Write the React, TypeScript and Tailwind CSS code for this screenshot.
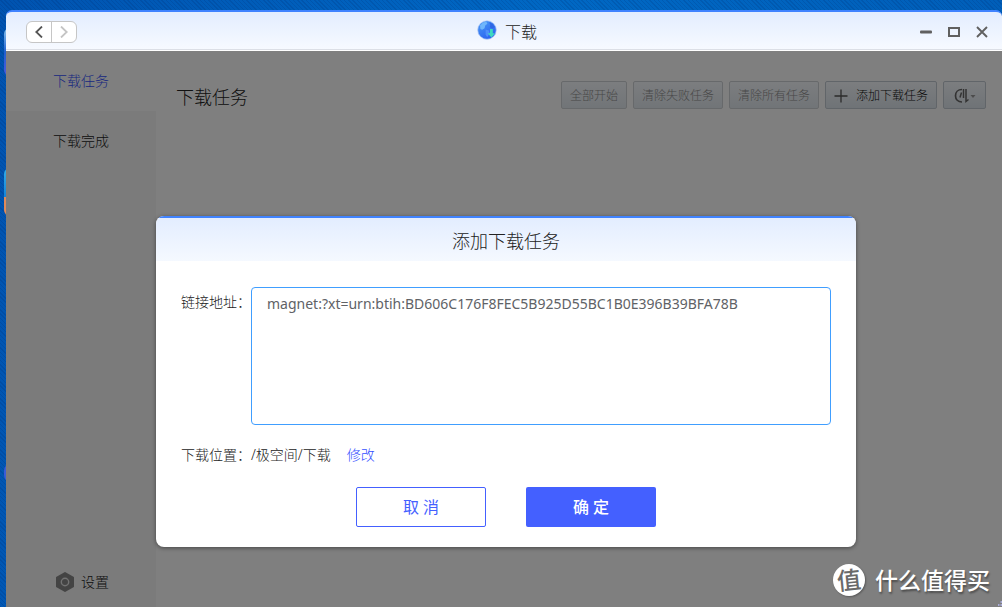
import { useState } from "react";
import type { ReactNode } from "react";

function GlobeIcon() {
  return (
    <svg width="20" height="20" viewBox="0 0 20 20" className="mb-1" aria-hidden="true">
      <defs>
        <linearGradient id="globe" x1="0" y1="0" x2="0.6" y2="1">
          <stop offset="0" stopColor="#4a9bf5" />
          <stop offset="1" stopColor="#2a63f0" />
        </linearGradient>
      </defs>
      <circle cx="10" cy="10" r="9.3" fill="url(#globe)" stroke="#b9cdf3" strokeWidth="0.7" />
      <path d="M3 5.5 6 2.6l3.4-.8 1 2-2.2 1.8-.6 2.600-2.400 1.600L3.400 9z" fill="#6fb6fb" />
      <path d="m12 2.200 3.600 1.600 2.200 3.400-2.400 1.400-2.600-1.400.6-2.400z" fill="#2f66e4" />
      <path d="m8.600 9.400 3.200 1 .8 2.800-2.400 4-1.600-2.800z" fill="#4f8ffa" />
      <path d="M13 9h2.800v4.300h2.200l-3.600 4.200-3.600-4.200H13z" fill="#3ed9c0" />
    </svg>
  );
}

type ToolButtonProps = {
  children: ReactNode;
  disabled?: boolean;
  label?: string;
};

function ToolButton({ children, disabled = false, label }: ToolButtonProps) {
  return (
    <button
      type="button"
      disabled={disabled}
      aria-label={label}
      className={
        disabled
          ? "flex h-7 items-center rounded-xs border border-[#cfd2d6] bg-linear-to-b from-[#f8fbff] to-[#e3eaf0] px-2 pt-0.5 text-xs text-[#909090]"
          : "flex h-7 items-center rounded-xs border border-[#c3cad2] bg-linear-to-b from-[#f8fbff] to-[#dfe7ee] px-2 pt-0.5 text-xs text-[#111]"
      }
    >
      {children}
    </button>
  );
}

function TitleBar() {
  return (
    <header className="grid h-[41px] grid-cols-[1fr_auto_1fr] items-center rounded-t-md border-t-2 border-b border-t-[#4083ff] border-b-white bg-linear-to-b from-[#e3edff] to-[#f7faff] pt-0.5 pr-3.5 pl-5 shadow-[inset_0_-1px_0_#dcdfe6]">
      <div className="flex h-[22px] w-[51px] divide-x divide-[#c6c6c6] rounded-md border border-[#c6c6c6] bg-white">
        <button type="button" aria-label="后退" className="flex flex-1 items-center justify-center">
          <svg width="8" height="12" viewBox="0 0 8 12" fill="none" stroke="#555" strokeWidth="1.8">
            <path d="M7 .5 1.300 6 7 11.500" />
          </svg>
        </button>
        <button type="button" aria-label="前进" className="flex flex-1 items-center justify-center">
          <svg width="8" height="12" viewBox="0 0 8 12" fill="none" stroke="#c4c4c4" strokeWidth="1.8">
            <path d="M1 .5 6.700 6 1 11.500" />
          </svg>
        </button>
      </div>
      <div className="flex items-center gap-2">
        <GlobeIcon />
        <span className="text-base leading-6 text-[#222]">下载</span>
      </div>
      <div className="flex justify-end gap-4 text-[#606060]">
        <button type="button" aria-label="最小化">
          <svg width="12" height="12" viewBox="0 0 12 12">
            <rect y="4.5" width="12" height="3" rx="1" fill="currentColor" />
          </svg>
        </button>
        <button type="button" aria-label="最大化">
          <svg width="12" height="12" viewBox="0 0 12 12" fill="none" stroke="currentColor" strokeWidth="2">
            <rect x="1" y="2" width="10" height="8" />
          </svg>
        </button>
        <button type="button" aria-label="关闭">
          <svg width="12" height="12" viewBox="0 0 12 12" fill="none" stroke="currentColor" strokeWidth="1.9">
            <path d="m1 1 10 10M11 1 1 11" />
          </svg>
        </button>
      </div>
    </header>
  );
}

function Sidebar() {
  return (
    <nav className="flex w-[150px] shrink-0 flex-col bg-[#f6f6f6] text-sm">
      <a href="#tasks" className="flex h-[60px] items-center bg-white pl-[47px] text-[#3450ff]">
        下载任务
      </a>
      <a href="#done" className="flex h-[60px] items-center pl-[47px]">
        下载完成
      </a>
      <a href="#settings" className="mt-auto mb-[15px] flex items-center gap-1.5 pl-[49px] leading-5">
        <svg width="20" height="20" viewBox="0 0 20 20" aria-hidden="true">
          <path d="M10 1 18 5.500v9L10 19l-8-4.500v-9z" fill="#888" stroke="#888" strokeWidth="2" strokeLinejoin="round" />
          <circle cx="10" cy="10" r="3.700" fill="none" stroke="#e4e4e4" strokeWidth="1.400" />
        </svg>
        设置
      </a>
    </nav>
  );
}

function TaskList() {
  return (
    <main className="flex-1 bg-white">
      <div className="flex items-start justify-between pt-[30px] pr-4 pl-5">
        <h1 className="pt-0.5 text-lg leading-7">下载任务</h1>
        <div className="flex gap-1.5">
          <ToolButton disabled>全部开始</ToolButton>
          <ToolButton disabled>清除失败任务</ToolButton>
          <ToolButton disabled>清除所有任务</ToolButton>
          <ToolButton>
            <svg width="14" height="14" viewBox="0 0 14 14" className="mr-2" stroke="#555" strokeWidth="1.3" aria-hidden="true">
              <path d="M7 .5v13M.5 7h13" />
            </svg>
            添加下载任务
          </ToolButton>
          <ToolButton label="限速">
            <svg width="25" height="16" viewBox="0 0 25 16" fill="none" stroke="#666" aria-hidden="true">
              <path d="M10 1.500C6 1.500 3.500 4.300 3.500 7.800S6 14 10 14" strokeWidth="1.700" />
              <path d="M9.500 4.500 8 9.500" strokeWidth="1.500" />
              <path d="M11.500 1v9M14 1v12.500l2.500-2" strokeWidth="1.500" />
              <path d="M18.500 7h5L21 10z" fill="#999" stroke="none" />
            </svg>
          </ToolButton>
        </div>
      </div>
    </main>
  );
}

function AddTaskDialog() {
  const [link, setLink] = useState("magnet:?xt=urn:btih:BD606C176F8FEC5B925D55BC1B0E396B39BFA78B");

  return (
    <div
      role="dialog"
      aria-labelledby="dialog-title"
      className="w-[700px] overflow-hidden rounded-lg bg-white shadow-[0_1px_4px_rgba(0,0,0,0.45)]"
    >
      <h2
        id="dialog-title"
        className="flex h-[45px] items-center justify-center border-t-2 border-[#4083ff] bg-linear-to-b from-[#e3edff] to-[#f5f9ff] pt-0.5 text-lg"
      >
        添加下载任务
      </h2>
      <form className="px-[25px] pt-[26px] pb-5 text-sm" onSubmit={(e) => e.preventDefault()}>
        <div className="flex">
          <label htmlFor="link" className="w-[70px] shrink-0 pt-[3px] leading-6 whitespace-nowrap">
            链接地址：
          </label>
          <textarea
            id="link"
            value={link}
            onChange={(e) => setLink(e.target.value)}
            className="h-[138px] flex-1 resize-none rounded-sm border border-[#409eff] px-[15px] py-1 leading-6 font-normal text-[#606266] outline-none"
          />
        </div>
        <div className="mt-[18px] flex leading-6">
          <span className="w-[70px] shrink-0 whitespace-nowrap">下载位置：</span>
          <span>/极空间/下载</span>
          <a href="#location" className="ml-4 text-[#3450ff]">
            修改
          </a>
        </div>
        <div className="mt-5 flex justify-center gap-10 text-base">
          <button type="button" className="h-10 w-[130px] rounded-xs border border-[#4460ff] font-normal text-[#4460ff]">
            取 消
          </button>
          <button type="submit" className="h-10 w-[130px] rounded-xs bg-[#4460ff] font-medium text-white">
            确 定
          </button>
        </div>
      </form>
    </div>
  );
}

function Watermark() {
  return (
    <div className="absolute right-3 bottom-[11px] flex items-center gap-2.5 text-white">
      <span className="flex size-8 items-center justify-center rounded-full bg-white text-2xl leading-8 font-medium text-[#6a6a6a] shadow-[1px_1px_2px_rgba(0,0,0,0.3)]">
        <span className="-rotate-6">值</span>
      </span>
      <span className="text-[23px] leading-8 font-medium [text-shadow:1px_2px_2px_rgba(0,0,0,0.4)]">什么值得买</span>
    </div>
  );
}

export default function App() {
  return (
    <div className="relative flex min-h-screen flex-col overflow-hidden bg-[#0050ae] bg-[repeating-linear-gradient(45deg,rgba(0,30,90,0.15)_0_1px,transparent_1px_3px),linear-gradient(100deg,#0053b0,#0068c4_50%,#005cb6)] pt-2.5 pl-1.5 font-['Noto_Sans','Noto_Sans_CJK_SC',sans-serif] font-light text-[#222]">
      {/* desktop shortcuts peeking out from behind the window */}
      <div className="absolute top-7 left-1 h-12 w-4 rounded-md bg-linear-to-b from-[#8cc4ec] via-[#2060d0] to-[#4a58e0]" />
      <div className="absolute top-[168px] left-1 h-12 w-4 rounded-md bg-linear-to-b from-[#35aee8] from-0% via-[#1684d8] via-60% to-[#e08a5a] to-60%" />
      <div className="absolute top-[463px] left-1 h-5 w-4 rounded-full bg-[#3a5cd8]" />

      <div className="relative flex flex-1 flex-col">
        <TitleBar />
        <div className="relative flex flex-1">
          <Sidebar />
          <TaskList />
          <div className="absolute inset-0 flex items-start justify-center bg-black/50 pt-[165px] pl-1">
            <AddTaskDialog />
          </div>
        </div>
      </div>

      <Watermark />
      <svg width="4" height="6" viewBox="0 0 4 6" className="absolute right-0 bottom-0" fill="#a9abd8" aria-hidden="true">
        <path d="M2.500 0H4v2H2.500zM0 3h1.500v2H0zM2.500 3H4v2H2.500z" />
      </svg>
    </div>
  );
}
